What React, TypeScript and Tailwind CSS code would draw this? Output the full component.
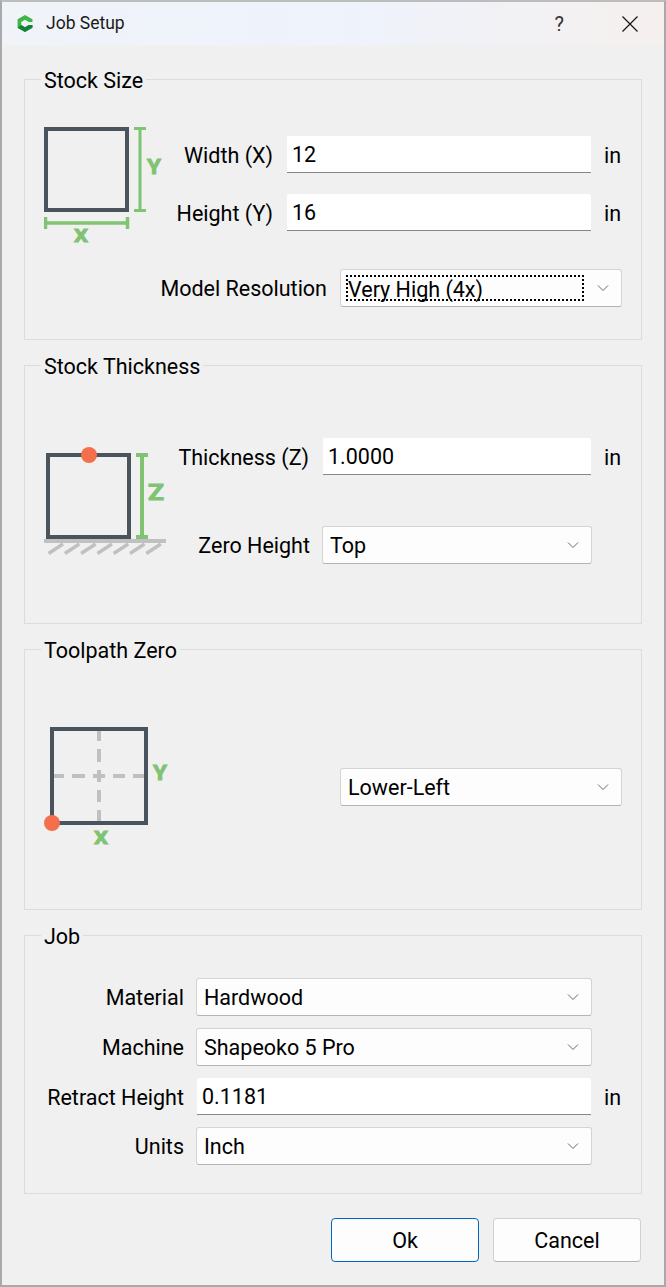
import React from 'react';

const font = { fontFamily: 'Roboto, sans-serif' };
const DARK = '#4a545c';
const GREEN = '#7fc373';
const GRAY = '#c0c0c0';
const ORANGE = '#f4704c';

const Chevron = () => (
  <svg width="12" height="8" viewBox="0 0 12 8" fill="none" className="shrink-0">
    <path d="M1 1.5 L6 6.5 L11 1.5" stroke="#6a6a6a" strokeWidth="1" />
  </svg>
);

const Select = ({ value, className, focused }: { value: string; className: string; focused?: boolean }) => (
  <div className={`h-[38px] flex items-center justify-between rounded-[3px] border border-[#d4d4d4] border-b-[#b4b4b4] bg-[#fdfdfd] pr-[12px] ${className}`}>
    {focused ? (
      <span className="ml-[5px] w-[238px] h-[26px] flex items-center border-2 border-dotted border-black leading-none whitespace-nowrap pt-[3px]">
        {value}
      </span>
    ) : (
      <span className="ml-[7px] whitespace-nowrap pt-[3px]">{value}</span>
    )}
    <Chevron />
  </div>
);

const Input = ({ value, className }: { value: string; className: string }) => (
  <div className={`h-[37px] flex items-center bg-white border-b-[1.5px] border-[#868686] pl-[5px] pt-[3px] rounded-t-[2px] ${className}`}>
    {value}
  </div>
);

const Group = ({ title, className, children }: { title: string; className: string; children: React.ReactNode }) => (
  <div className={`relative border border-[#dcdcdc] px-[19px] ${className}`}>
    <span className="absolute left-[16px] -top-[12px] bg-[#f0f0f0] px-[3px] leading-[26px]">{title}</span>
    {children}
  </div>
);

const Letter = ({ x, y, children, size, width }: { x: number; y: number; children: string; size: number; width: number }) => (
  <text
    x={x}
    y={y}
    fill={GREEN}
    stroke={GREEN}
    strokeWidth="0.9"
    fontSize={size}
    fontWeight="700"
    textAnchor="middle"
    textLength={width}
    lengthAdjust="spacingAndGlyphs"
    style={font}
  >
    {children}
  </text>
);

const SizeIcon = () => (
  <svg width="120" height="120" viewBox="44 127 120 120" className="shrink-0 -mb-[4px]">
    <rect x="46" y="129" width="81" height="81" fill="none" stroke={DARK} strokeWidth="4" />
    <path d="M134 128.5H146M140 128.5V210.5M134 210.5H146" fill="none" stroke={GREEN} strokeWidth="3" />
    <path d="M45.5 217V229M127.5 217V229M45.5 223H127.5" fill="none" stroke={GREEN} strokeWidth="3.5" />
    <Letter x={154} y={174} size={21} width={14}>Y</Letter>
    <Letter x={81} y={241.5} size={18} width={14}>X</Letter>
  </svg>
);

const ThicknessIcon = () => (
  <svg width="122" height="110" viewBox="44 447 122 110" className="shrink-0">
    <rect x="48" y="455" width="81" height="82" fill="none" stroke={DARK} strokeWidth="4" />
    <circle cx="89" cy="455" r="8" fill={ORANGE} />
    <path d="M136 455H148M142 455V539M136 537H148" fill="none" stroke={GREEN} strokeWidth="4" />
    <Letter x={156} y={499.5} size={22} width={16}>Z</Letter>
    <rect x="44" y="539" width="122" height="4" fill={GRAY} />
    {[0, 1, 2, 3, 4, 5, 6].map((i) => (
      <path key={i} d={`M${48.5 + i * 16.3} 553.5L${63 + i * 16.3} 544`} stroke={GRAY} strokeWidth="3.5" />
    ))}
  </svg>
);

const ZeroIcon = () => (
  <svg width="126" height="124" viewBox="44 727 126 124" className="shrink-0">
    <rect x="52" y="729" width="94" height="94" fill="none" stroke={DARK} strokeWidth="4" />
    <path
      d="M99 731V741M99 749V762M99 770V782M99 790V802M99 810V821M54 776H64M72 776H85M93 776H105M113 776H125M133 776H144"
      fill="none"
      stroke={GRAY}
      strokeWidth="4"
    />
    <circle cx="52" cy="823" r="8" fill={ORANGE} />
    <Letter x={160} y={780} size={21} width={14}>Y</Letter>
    <Letter x={101} y={844} size={18} width={14}>X</Letter>
  </svg>
);

export default function App() {
  return (
    <div className="w-[666px] h-[1287px] bg-[#f0f0f0] border-2 border-[#a9a9a9] border-t-[#bdbdbd] text-[21.5px] text-black overflow-hidden" style={font}>
      {/* title bar */}
      <div className="h-[43px] flex items-center bg-gradient-to-r from-[#f0f3f8] via-[#eef3fc] to-[#f5f0ee]">
        <svg width="16" height="17" viewBox="2 1 14 16" className="ml-[15px] shrink-0">
          <path d="M9 1L16 5V7.5L12.5 7.5L9 5.5L5.5 7.5V10.5L9 12.5L12.5 10.5L16 10.5V13L9 17L2 13V5Z" fill="#3fb54a" />
          <path d="M2 13L5.5 10.5L9 12.5V17Z M9 12.5L12.5 10.5L16 10.5V13L9 17Z" fill="#14803c" />
        </svg>
        <span className="ml-[13px] text-[17.5px] text-[#1a1a1a]">Job Setup</span>
        <span className="ml-auto text-[20px] text-[#333]">?</span>
        <svg width="16" height="16" viewBox="0 0 16 16" className="ml-[58px] mr-[26px]">
          <path d="M0.5 0.5L15.5 15.5M15.5 0.5L0.5 15.5" stroke="#1a1a1a" strokeWidth="1.3" />
        </svg>
      </div>

      <div className="px-[22px] pt-[34px]">
        <Group title="Stock Size" className="h-[261px] pt-[47px]">
          <div className="flex">
            <SizeIcon />
            <div className="flex flex-col pt-[9px] gap-[21px] -ml-[16px]">
              {[['Width (X)', '12'], ['Height (Y)', '16']].map(([label, value]) => (
                <div key={label} className="flex items-center">
                  <span className="w-[125px] text-right pt-[3px]">{label}</span>
                  <Input value={value} className="ml-[14px] w-[304px]" />
                  <span className="ml-[13px] pt-[3px]">in</span>
                </div>
              ))}
            </div>
          </div>
          <div className="flex items-center justify-end mt-[26px]">
            <span className="mr-[13px] pt-[3px]">Model Resolution</span>
            <Select value="Very High (4x)" className="w-[282px]" focused />
          </div>
        </Group>

        <Group title="Stock Thickness" className="h-[259px] mt-[25px] pt-[72px]">
          <div className="flex">
            <div className="pt-[9px]">
              <ThicknessIcon />
            </div>
            <div className="flex flex-col">
              <div className="flex items-center">
                <span className="w-[143px] text-right pt-[3px]">Thickness (Z)</span>
                <Input value="1.0000" className="ml-[14px] w-[268px]" />
                <span className="ml-[13px] pt-[3px]">in</span>
              </div>
              <div className="flex items-center mt-[51px]">
                <span className="w-[144px] text-right pt-[3px]">Zero Height</span>
                <Select value="Top" className="ml-[12px] w-[270px]" />
              </div>
            </div>
          </div>
        </Group>

        <Group title="Toolpath Zero" className="h-[261px] mt-[25px] pt-[77px] flex justify-between">
          <ZeroIcon />
          <Select value="Lower-Left" className="w-[282px] mt-[41px]" />
        </Group>

        <Group title="Job" className="h-[259px] mt-[25px] pt-[42px]">
          <div className="flex flex-col gap-[12px]">
            {[['Material', 'Hardwood'], ['Machine', 'Shapeoko 5 Pro']].map(([label, value]) => (
              <div key={label} className="flex items-center">
                <span className="w-[140px] text-right pt-[3px]">{label}</span>
                <Select value={value} className="ml-[12px] w-[396px]" />
              </div>
            ))}
            <div className="flex items-center">
              <span className="w-[140px] text-right whitespace-nowrap pt-[3px]">Retract Height</span>
              <Input value="0.1181" className="ml-[13px] w-[394px]" />
              <span className="ml-[13px] pt-[3px]">in</span>
            </div>
            <div className="flex items-center">
              <span className="w-[140px] text-right pt-[3px]">Units</span>
              <Select value="Inch" className="ml-[12px] w-[396px]" />
            </div>
          </div>
        </Group>

        <div className="flex justify-end gap-[14px] mt-[24px] mr-[1px]">
          <button className="w-[148px] h-[44px] pt-[3px] rounded-[4px] border border-[#0067c0] bg-[#fdfdfd]">Ok</button>
          <button className="w-[148px] h-[44px] pt-[3px] rounded-[4px] border border-[#d0d0d0] border-b-[#b4b4b4] bg-[#fdfdfd]">Cancel</button>
        </div>
      </div>
    </div>
  );
}
